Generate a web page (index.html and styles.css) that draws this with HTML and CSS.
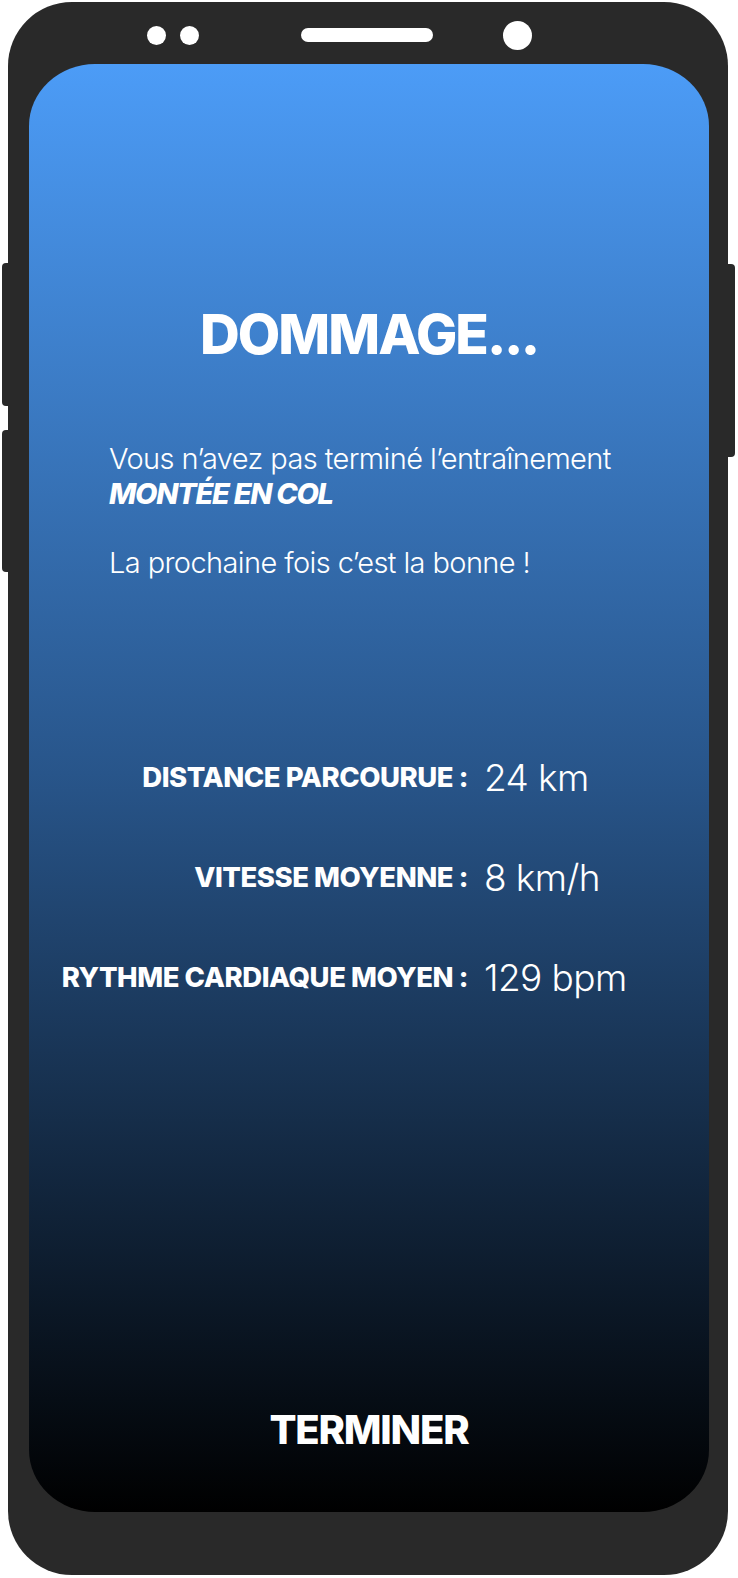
FILE: index.html
```html
<!DOCTYPE html>
<html lang="fr">
<head>
<meta charset="utf-8">
<title>Dommage</title>
<link rel="stylesheet" href="styles.css">
</head>
<body>
<div class="phone">
  <div class="side-btn side-l1"></div>
  <div class="side-btn side-l2"></div>
  <div class="side-btn side-r1"></div>
  <div class="top-bar">
    <span class="dot dot-1"></span>
    <span class="dot dot-2"></span>
    <span class="speaker"></span>
    <span class="camera"></span>
  </div>
  <main class="screen">
    <h1 class="title">DOMMAGE<span class="dots">...</span></h1>
    <p class="message">Vous n’avez pas terminé l’entraînement<br><strong>MONTÉE EN COL</strong><br><br>La prochaine fois c’est la bonne !</p>
    <dl class="stats">
      <dt class="label">DISTANCE PARCOURUE :</dt>
      <dd class="value">24 km</dd>
      <dt class="label">VITESSE MOYENNE :</dt>
      <dd class="value">8 km/h</dd>
      <dt class="label">RYTHME CARDIAQUE MOYEN :</dt>
      <dd class="value">129 bpm</dd>
    </dl>
    <div class="finish">TERMINER</div>
  </main>
</div>
</body>
</html>
```
FILE: styles.css
```css
html, body {
  margin: 0;
  padding: 0;
  background: #ffffff;
}

body {
  width: 738px;
  height: 1578px;
  overflow: hidden;
  font-family: "Inter", "Noto Sans", "Liberation Sans", sans-serif;
}

.phone {
  position: relative;
  margin: 2px 0 0 8px;
  width: 720px;
  height: 1573px;
  background: #292929;
  border-radius: 64px;
  display: flex;
  flex-direction: column;
  box-sizing: border-box;
}

.side-btn {
  position: absolute;
  background: #292929;
  width: 10px;
}

.side-l1 {
  left: -6px;
  top: 261px;
  height: 143px;
  border-radius: 4px 0 0 4px;
}

.side-l2 {
  left: -6px;
  top: 428px;
  height: 142px;
  border-radius: 4px 0 0 4px;
}

.side-r1 {
  right: -7px;
  top: 262px;
  height: 193px;
  border-radius: 0 4px 4px 0;
}

.top-bar {
  height: 62px;
  flex: 0 0 62px;
  display: flex;
  align-items: center;
  padding-top: 4px;
  box-sizing: border-box;
}

.dot {
  width: 19px;
  height: 19px;
  border-radius: 50%;
  background: #ffffff;
  flex: 0 0 auto;
}

.dot-1 {
  margin-left: 139px;
}

.dot-2 {
  margin-left: 14px;
}

.speaker {
  margin-left: 102px;
  width: 132px;
  height: 14px;
  border-radius: 7px;
  background: #ffffff;
}

.camera {
  margin-left: 70px;
  width: 29px;
  height: 29px;
  border-radius: 50%;
  background: #ffffff;
}

.screen {
  margin: 0 19px 0 21px;
  height: 1448px;
  flex: 0 0 1448px;
  border-radius: 66px / 62px;
  background: linear-gradient(180deg, #4c9cf7 0%, #28558a 49%, #000000 100%);
  display: flex;
  flex-direction: column;
  box-sizing: border-box;
  padding: 237px 0 58px;
  color: #ffffff;
}

.title {
  margin: 0;
  font-size: 55px;
  line-height: 66px;
  font-weight: 800;
  text-align: center;
  letter-spacing: -2px;
}

.title .dots {
  letter-spacing: -2.4px;
}

.message {
  margin: 75px 0 0 80px;
  font-size: 29px;
  line-height: 34.5px;
  font-weight: 300;
  letter-spacing: -0.6px;
}

.message strong {
  font-weight: 800;
  font-style: italic;
  letter-spacing: -1.3px;
}

.stats {
  margin: 172px 0 0;
  display: grid;
  grid-template-columns: 439px 1fr;
  column-gap: 16px;
  row-gap: 50px;
  align-items: center;
}

.label {
  margin: 0;
  height: 50px;
  display: flex;
  align-items: center;
  justify-content: flex-end;
  font-size: 27.5px;
  font-weight: 800;
  letter-spacing: -0.45px;
  white-space: nowrap;
}

.value {
  margin: 0;
  height: 50px;
  display: flex;
  align-items: center;
  font-size: 37px;
  font-weight: 300;
  letter-spacing: -0.6px;
  white-space: nowrap;
}

.finish {
  margin-top: auto;
  height: 48px;
  line-height: 48px;
  text-align: center;
  font-size: 40px;
  font-weight: 800;
  letter-spacing: -1.2px;
}
```
